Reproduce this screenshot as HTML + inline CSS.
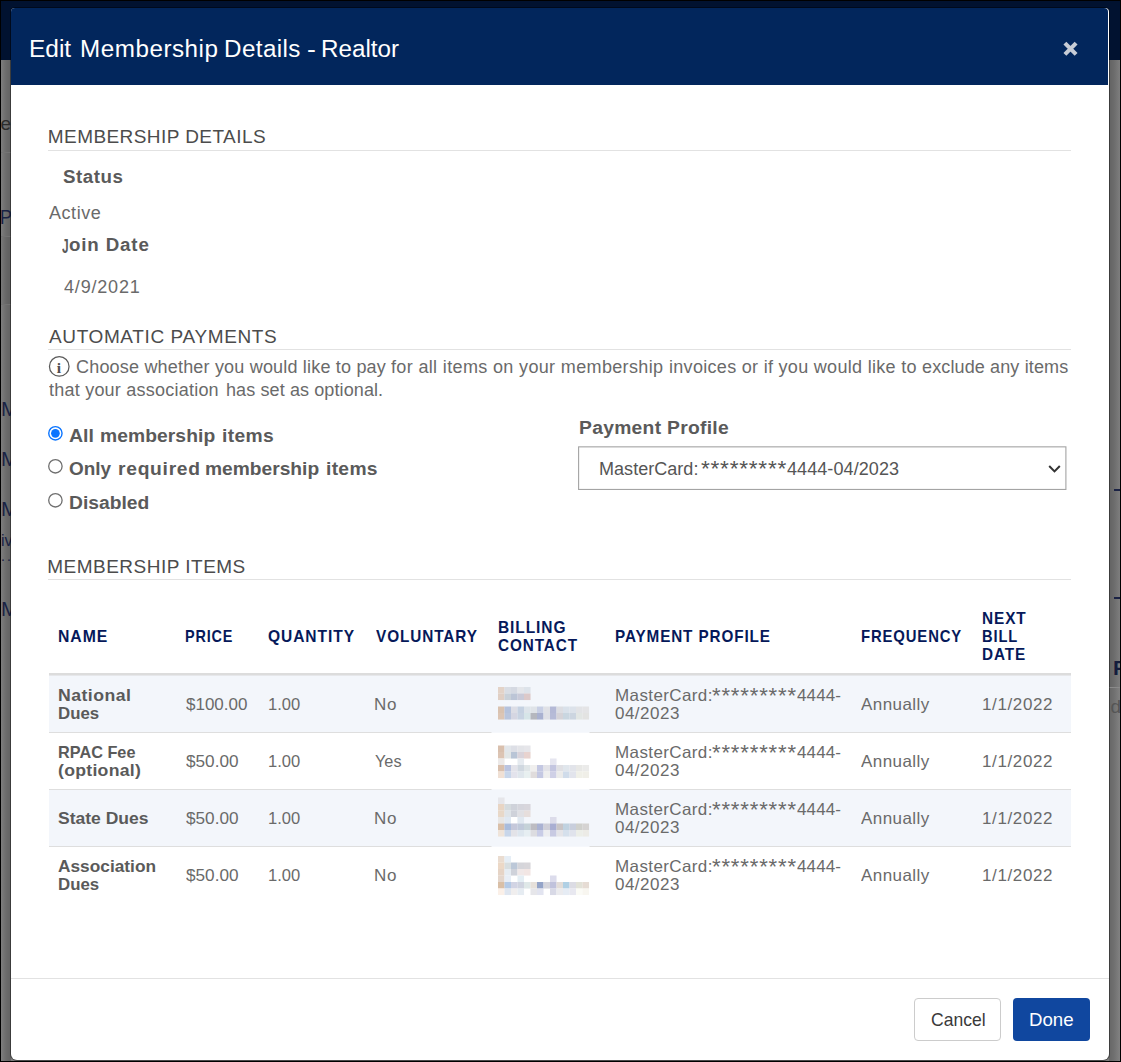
<!DOCTYPE html>
<html lang="en">
<head>
<meta charset="utf-8">
<title>Edit Membership Details - Realtor</title>
<style>
html,body{margin:0;padding:0}
body{width:1121px;height:1062px;overflow:hidden;position:relative;background:#7d7d7d;font-family:"Liberation Sans",sans-serif}
.abs{position:absolute}
.t{position:absolute;white-space:nowrap;transform-origin:0 50%;line-height:normal;font-family:"Liberation Sans",sans-serif}
#frame{position:absolute;left:0;top:0;width:1121px;height:1062px;box-sizing:border-box;border:1px solid #000;z-index:50;pointer-events:none}
#topband{position:absolute;left:0;top:0;width:1121px;height:60px;background:#011230}
#modal{position:absolute;left:11px;top:8px;width:1098px;height:1052px;background:#fff;border-radius:4px 4px 6px 6px;box-shadow:0 0 0 1px rgba(0,0,0,.4)}
#mhead{position:absolute;left:0;top:0;width:1097px;height:77px;background:#02265c;border-radius:4px 4px 0 0}
.hr{position:absolute;left:48px;width:1023px;height:1px;background:#e2e2e2}
.rowbg{position:absolute;left:49px;width:1022px;background:#f3f6fb}
.rowln{position:absolute;left:49px;width:1022px;height:1px;background:#dedede}
.btn{position:absolute;top:998px;height:43px;box-sizing:border-box;border-radius:4px}
</style>
</head>
<body>
<div id="topband"></div>
<div class="abs" style="left:1px;top:60px;width:10px;height:1001px;overflow:hidden;background:linear-gradient(90deg,#7e7e7e 0,#6c6c6c 5px,#646464 9px)">
<div class="abs" style="left:0;top:92px;width:10px;height:1px;background:#747474"></div>
<div class="abs" style="left:0;top:176px;width:10px;height:68px;background:rgba(0,0,0,.04)"></div>
<div class="abs" style="left:0;top:176px;width:10px;height:1px;background:#727272"></div>
<div class="abs" style="left:0;top:244px;width:10px;height:1px;background:#727272"></div>
<div class="t" style="left:-0.5px;top:53px;font-size:19px;color:#2c2c2c">e</div>
<div class="t" style="left:-1.5px;top:145px;font-size:21px;color:#1a2244;transform:scaleX(.85)">P</div>
<div class="t" style="left:0px;top:337px;font-size:20.5px;color:#1a2244">M</div>
<div class="t" style="left:0px;top:387px;font-size:20.5px;color:#1a2244">M</div>
<div class="t" style="left:0px;top:437px;font-size:20.5px;color:#1a2244">M</div>
<div class="t" style="left:0px;top:472px;font-size:16px;color:#1a2244">iv</div>
<div class="t" style="left:0px;top:488px;font-size:14px;color:#1a2244;letter-spacing:2px">..</div>
<div class="t" style="left:0px;top:536.5px;font-size:20.5px;color:#1a2244">M</div>
</div>
<div class="abs" style="left:1109px;top:60px;width:11px;height:1001px;overflow:hidden;background:linear-gradient(90deg,#646464 1px,#6c6c6c 5px,#7e7e7e 11px)">
<div class="abs" style="left:0;top:627px;width:11px;height:374px;background:rgba(255,255,255,.03)"></div>
<div class="abs" style="left:5px;top:429px;width:6px;height:1.5px;background:#1a2244"></div>
<div class="abs" style="left:5px;top:537px;width:6px;height:1.5px;background:#1a2244"></div>
<div class="abs" style="left:0;top:627px;width:11px;height:1px;background:#8a8a8a"></div>
<div class="t" style="left:4px;top:596px;font-size:21px;font-weight:700;color:#141c3c">P</div>
<div class="t" style="left:1.5px;top:636px;font-size:19px;color:#555">d</div>
</div>
<div id="modal"><div id="mhead"></div></div>
<div id="frame"></div>

<!-- close x -->
<svg class="abs" style="left:1058px;top:37px" width="24" height="24" viewBox="0 0 24 24"><path d="M6.9 6.1 L18.1 17.4 M18.1 6.1 L6.9 17.4" stroke="#c7ccd6" stroke-width="4.1" fill="none"/></svg>

<!-- rules -->
<div class="hr" style="top:150px"></div>
<div class="hr" style="top:349px"></div>
<div class="hr" style="top:579px"></div>
<div class="abs" style="left:11px;top:978px;width:1098px;height:1px;background:#e2e2e2"></div>

<!-- info icon -->
<svg class="abs" style="left:47px;top:355px" width="25" height="25" viewBox="0 0 25 25"><circle cx="12.25" cy="11.4" r="9.8" fill="none" stroke="#5a5a5a" stroke-width="1.25"/></svg>
<div class="t" style="left:56.7px;top:358.5px;font-family:'Liberation Serif',serif;font-weight:700;font-size:15.5px;color:#505050">i</div>

<!-- radios -->
<svg class="abs" style="left:46px;top:424px" width="20" height="86" viewBox="0 0 20 86">
<circle cx="9.4" cy="9.3" r="6.65" fill="#fff" stroke="#0a74ff" stroke-width="1.4"/><circle cx="9.4" cy="9.3" r="4.35" fill="#0a74ff"/>
<circle cx="9.4" cy="42.3" r="6.7" fill="#fff" stroke="#6f6f6f" stroke-width="1.3"/>
<circle cx="9.4" cy="76.3" r="6.7" fill="#fff" stroke="#6f6f6f" stroke-width="1.3"/>
</svg>

<!-- select -->
<svg class="abs" style="left:576px;top:444px" width="494" height="50" viewBox="0 0 494 50"><rect x="2.6" y="2.85" width="487.3" height="42.6" fill="#fff" stroke="#a4a4a4" stroke-width="1.1"/></svg>
<svg class="abs" style="left:1046px;top:462px" width="18" height="14" viewBox="0 0 18 14"><path d="M3.2 4 L8.5 9.4 L13.8 4" stroke="#333" stroke-width="2" fill="none"/></svg>

<!-- table -->
<div class="abs" style="left:49px;top:673px;width:1022px;height:2px;background:#dcdcdc"></div><div class="abs" style="left:49px;top:675px;width:1022px;height:1px;background:#e6e7ea;z-index:2"></div>
<div class="rowbg" style="top:675px;height:57px"></div>
<div class="rowln" style="top:732px"></div>
<div class="rowln" style="top:789px"></div>
<div class="rowbg" style="top:790px;height:56px"></div>
<div class="rowln" style="top:846px"></div>
<svg class="abs" style="left:491px;top:676px" width="100" height="228" viewBox="0 0 100 228">
<rect x="0.5" y="56" width="98" height="1" fill="#f6f8fc"/>
<rect x="0.5" y="113" width="98" height="1" fill="#f7f9fc"/>
<rect x="0.5" y="170" width="98" height="1" fill="#f6f8fc"/>
<rect x="7.0" y="11.0" width="6.55" height="6.55" fill="#e3d3c8"/>
<rect x="13.5" y="11.0" width="6.55" height="6.55" fill="#d9dde4"/>
<rect x="20.0" y="11.0" width="6.55" height="6.55" fill="#d5d9e2"/>
<rect x="26.5" y="11.0" width="6.55" height="6.55" fill="#e4e6ea"/>
<rect x="33.0" y="11.0" width="6.55" height="6.55" fill="#dde3ea"/>
<rect x="7.0" y="17.5" width="6.55" height="6.55" fill="#e0cfc4"/>
<rect x="13.5" y="17.5" width="6.55" height="6.55" fill="#c9d1d9"/>
<rect x="20.0" y="17.5" width="6.55" height="6.55" fill="#bcc5d6"/>
<rect x="26.5" y="17.5" width="6.55" height="6.55" fill="#c9cad8"/>
<rect x="33.0" y="17.5" width="6.55" height="6.55" fill="#dcc9c9"/>
<rect x="7.0" y="30.5" width="6.55" height="6.55" fill="#d9c2b0"/>
<rect x="13.5" y="30.5" width="6.55" height="6.55" fill="#b5c2dc"/>
<rect x="20.0" y="30.5" width="6.55" height="6.55" fill="#dcdde5"/>
<rect x="26.5" y="30.5" width="6.55" height="6.55" fill="#c5d1e1"/>
<rect x="33.0" y="30.5" width="6.55" height="6.55" fill="#dde4ea"/>
<rect x="39.5" y="30.5" width="6.55" height="6.55" fill="#dfe3e8"/>
<rect x="46.0" y="30.5" width="6.55" height="6.55" fill="#c8cfe4"/>
<rect x="52.5" y="30.5" width="6.55" height="6.55" fill="#e0e1e6"/>
<rect x="59.0" y="30.5" width="6.55" height="6.55" fill="#b4b9d6"/>
<rect x="65.5" y="30.5" width="6.55" height="6.55" fill="#dcdde2"/>
<rect x="72.0" y="30.5" width="6.55" height="6.55" fill="#d9e1ea"/>
<rect x="78.5" y="30.5" width="6.55" height="6.55" fill="#dce2ea"/>
<rect x="85.0" y="30.5" width="6.55" height="6.55" fill="#e2e3e6"/>
<rect x="91.5" y="30.5" width="6.55" height="6.55" fill="#e4e4e6"/>
<rect x="7.0" y="37.0" width="6.55" height="6.55" fill="#dcc5b4"/>
<rect x="13.5" y="37.0" width="6.55" height="6.55" fill="#b9c5dd"/>
<rect x="20.0" y="37.0" width="6.55" height="6.55" fill="#d5d6e2"/>
<rect x="26.5" y="37.0" width="6.55" height="6.55" fill="#c8d3e2"/>
<rect x="33.0" y="37.0" width="6.55" height="6.55" fill="#d6e5e8"/>
<rect x="39.5" y="37.0" width="6.55" height="6.55" fill="#b5b7be"/>
<rect x="46.0" y="37.0" width="6.55" height="6.55" fill="#a9b1d0"/>
<rect x="52.5" y="37.0" width="6.55" height="6.55" fill="#dfe0e6"/>
<rect x="59.0" y="37.0" width="6.55" height="6.55" fill="#b6bbd7"/>
<rect x="65.5" y="37.0" width="6.55" height="6.55" fill="#d5d3d8"/>
<rect x="72.0" y="37.0" width="6.55" height="6.55" fill="#c9d6e0"/>
<rect x="78.5" y="37.0" width="6.55" height="6.55" fill="#ccd5e0"/>
<rect x="85.0" y="37.0" width="6.55" height="6.55" fill="#e2e6e4"/>
<rect x="91.5" y="37.0" width="6.55" height="6.55" fill="#e3e3e2"/>
<rect x="7.0" y="69.5" width="6.55" height="6.55" fill="#d9c0ae"/>
<rect x="13.5" y="69.5" width="6.55" height="6.55" fill="#e2e6ea"/>
<rect x="20.0" y="69.5" width="6.55" height="6.55" fill="#dddfe6"/>
<rect x="26.5" y="69.5" width="6.55" height="6.55" fill="#e3e4e8"/>
<rect x="33.0" y="69.5" width="6.55" height="6.55" fill="#e6e6ea"/>
<rect x="7.0" y="76.0" width="6.55" height="6.55" fill="#dcc4b3"/>
<rect x="13.5" y="76.0" width="6.55" height="6.55" fill="#e2e6e6"/>
<rect x="20.0" y="76.0" width="6.55" height="6.55" fill="#b9c5d6"/>
<rect x="26.5" y="76.0" width="6.55" height="6.55" fill="#d9d3da"/>
<rect x="33.0" y="76.0" width="6.55" height="6.55" fill="#e8d3cf"/>
<rect x="7.0" y="82.5" width="6.55" height="6.55" fill="#ece9e8"/>
<rect x="26.5" y="82.5" width="6.55" height="6.55" fill="#e6ebf0"/>
<rect x="59.0" y="82.5" width="6.55" height="6.55" fill="#e6e6f0"/>
<rect x="7.0" y="89.0" width="6.55" height="6.55" fill="#d9c0ae"/>
<rect x="13.5" y="89.0" width="6.55" height="6.55" fill="#bac4e0"/>
<rect x="20.0" y="89.0" width="6.55" height="6.55" fill="#e3e3ea"/>
<rect x="26.5" y="89.0" width="6.55" height="6.55" fill="#d0d8e0"/>
<rect x="33.0" y="89.0" width="6.55" height="6.55" fill="#e0e6e8"/>
<rect x="39.5" y="89.0" width="6.55" height="6.55" fill="#f0efee"/>
<rect x="46.0" y="89.0" width="6.55" height="6.55" fill="#c4c8e2"/>
<rect x="52.5" y="89.0" width="6.55" height="6.55" fill="#e3e3e8"/>
<rect x="59.0" y="89.0" width="6.55" height="6.55" fill="#c4c6e0"/>
<rect x="65.5" y="89.0" width="6.55" height="6.55" fill="#e0e0e4"/>
<rect x="72.0" y="89.0" width="6.55" height="6.55" fill="#e0e6ec"/>
<rect x="78.5" y="89.0" width="6.55" height="6.55" fill="#e2e4ea"/>
<rect x="85.0" y="89.0" width="6.55" height="6.55" fill="#e8e8e6"/>
<rect x="91.5" y="89.0" width="6.55" height="6.55" fill="#ebebea"/>
<rect x="7.0" y="95.5" width="6.55" height="6.55" fill="#f0e0d4"/>
<rect x="13.5" y="95.5" width="6.55" height="6.55" fill="#c8d6ea"/>
<rect x="20.0" y="95.5" width="6.55" height="6.55" fill="#e3e3ec"/>
<rect x="26.5" y="95.5" width="6.55" height="6.55" fill="#dfe6ec"/>
<rect x="33.0" y="95.5" width="6.55" height="6.55" fill="#e8f0f0"/>
<rect x="39.5" y="95.5" width="6.55" height="6.55" fill="#e0dcdc"/>
<rect x="46.0" y="95.5" width="6.55" height="6.55" fill="#c4c8e2"/>
<rect x="52.5" y="95.5" width="6.55" height="6.55" fill="#eeeeee"/>
<rect x="59.0" y="95.5" width="6.55" height="6.55" fill="#cfd0e6"/>
<rect x="65.5" y="95.5" width="6.55" height="6.55" fill="#ebebea"/>
<rect x="72.0" y="95.5" width="6.55" height="6.55" fill="#d0dcea"/>
<rect x="78.5" y="95.5" width="6.55" height="6.55" fill="#e2e4ec"/>
<rect x="85.0" y="95.5" width="6.55" height="6.55" fill="#f0f0e8"/>
<rect x="91.5" y="95.5" width="6.55" height="6.55" fill="#f0efe8"/>
<rect x="7.0" y="121.5" width="6.55" height="6.55" fill="#e6e6ea"/>
<rect x="7.0" y="128.0" width="6.55" height="6.55" fill="#e8d5c4"/>
<rect x="13.5" y="128.0" width="6.55" height="6.55" fill="#d5dbde"/>
<rect x="20.0" y="128.0" width="6.55" height="6.55" fill="#cfd2da"/>
<rect x="26.5" y="128.0" width="6.55" height="6.55" fill="#d5d5dc"/>
<rect x="33.0" y="128.0" width="6.55" height="6.55" fill="#d8d6dc"/>
<rect x="7.0" y="134.5" width="6.55" height="6.55" fill="#e8d8c8"/>
<rect x="13.5" y="134.5" width="6.55" height="6.55" fill="#dfe4e8"/>
<rect x="20.0" y="134.5" width="6.55" height="6.55" fill="#cfd2da"/>
<rect x="26.5" y="134.5" width="6.55" height="6.55" fill="#e0e0e4"/>
<rect x="33.0" y="134.5" width="6.55" height="6.55" fill="#e6dedc"/>
<rect x="7.0" y="141.0" width="6.55" height="6.55" fill="#e8e6e4"/>
<rect x="13.5" y="141.0" width="6.55" height="6.55" fill="#dfe8f2"/>
<rect x="20.0" y="141.0" width="6.55" height="6.55" fill="#ffffff"/>
<rect x="26.5" y="141.0" width="6.55" height="6.55" fill="#e0e8f0"/>
<rect x="59.0" y="141.0" width="6.55" height="6.55" fill="#dcdcea"/>
<rect x="7.0" y="147.5" width="6.55" height="6.55" fill="#d9bfa8"/>
<rect x="13.5" y="147.5" width="6.55" height="6.55" fill="#a9bcdc"/>
<rect x="20.0" y="147.5" width="6.55" height="6.55" fill="#c5c8da"/>
<rect x="26.5" y="147.5" width="6.55" height="6.55" fill="#c0c9da"/>
<rect x="33.0" y="147.5" width="6.55" height="6.55" fill="#c5d2d8"/>
<rect x="39.5" y="147.5" width="6.55" height="6.55" fill="#bdbcc2"/>
<rect x="46.0" y="147.5" width="6.55" height="6.55" fill="#aab2d2"/>
<rect x="52.5" y="147.5" width="6.55" height="6.55" fill="#cfcfd8"/>
<rect x="59.0" y="147.5" width="6.55" height="6.55" fill="#a9aed2"/>
<rect x="65.5" y="147.5" width="6.55" height="6.55" fill="#c8c4c6"/>
<rect x="72.0" y="147.5" width="6.55" height="6.55" fill="#c0d2e0"/>
<rect x="78.5" y="147.5" width="6.55" height="6.55" fill="#c8cedc"/>
<rect x="85.0" y="147.5" width="6.55" height="6.55" fill="#cfd0cc"/>
<rect x="91.5" y="147.5" width="6.55" height="6.55" fill="#d5d3d2"/>
<rect x="7.0" y="154.0" width="6.55" height="6.55" fill="#efe4da"/>
<rect x="13.5" y="154.0" width="6.55" height="6.55" fill="#c8d6ea"/>
<rect x="20.0" y="154.0" width="6.55" height="6.55" fill="#e3e3e8"/>
<rect x="26.5" y="154.0" width="6.55" height="6.55" fill="#dde6ee"/>
<rect x="33.0" y="154.0" width="6.55" height="6.55" fill="#e6eef2"/>
<rect x="39.5" y="154.0" width="6.55" height="6.55" fill="#dcdce0"/>
<rect x="46.0" y="154.0" width="6.55" height="6.55" fill="#c8cce6"/>
<rect x="52.5" y="154.0" width="6.55" height="6.55" fill="#ecedf0"/>
<rect x="59.0" y="154.0" width="6.55" height="6.55" fill="#c8cae2"/>
<rect x="65.5" y="154.0" width="6.55" height="6.55" fill="#e4e4e8"/>
<rect x="72.0" y="154.0" width="6.55" height="6.55" fill="#d5e0ec"/>
<rect x="78.5" y="154.0" width="6.55" height="6.55" fill="#e0e3ec"/>
<rect x="85.0" y="154.0" width="6.55" height="6.55" fill="#eceee8"/>
<rect x="91.5" y="154.0" width="6.55" height="6.55" fill="#ecebe6"/>
<rect x="7.0" y="180.0" width="6.55" height="6.55" fill="#eadcd0"/>
<rect x="13.5" y="180.0" width="6.55" height="6.55" fill="#e6eef6"/>
<rect x="7.0" y="186.5" width="6.55" height="6.55" fill="#ecd8c6"/>
<rect x="13.5" y="186.5" width="6.55" height="6.55" fill="#d8dee0"/>
<rect x="20.0" y="186.5" width="6.55" height="6.55" fill="#bcc8d8"/>
<rect x="26.5" y="186.5" width="6.55" height="6.55" fill="#d5d5da"/>
<rect x="33.0" y="186.5" width="6.55" height="6.55" fill="#d8d6da"/>
<rect x="7.0" y="193.0" width="6.55" height="6.55" fill="#e6d4c6"/>
<rect x="13.5" y="193.0" width="6.55" height="6.55" fill="#e6ecf2"/>
<rect x="20.0" y="193.0" width="6.55" height="6.55" fill="#cfd2da"/>
<rect x="26.5" y="193.0" width="6.55" height="6.55" fill="#f0e8e8"/>
<rect x="33.0" y="193.0" width="6.55" height="6.55" fill="#f2e6e4"/>
<rect x="7.0" y="199.5" width="6.55" height="6.55" fill="#e4d6cc"/>
<rect x="13.5" y="199.5" width="6.55" height="6.55" fill="#e8eef6"/>
<rect x="26.5" y="199.5" width="6.55" height="6.55" fill="#e4eef4"/>
<rect x="59.0" y="199.5" width="6.55" height="6.55" fill="#dcdcec"/>
<rect x="7.0" y="206.0" width="6.55" height="6.55" fill="#d9bfa6"/>
<rect x="13.5" y="206.0" width="6.55" height="6.55" fill="#b4cae6"/>
<rect x="20.0" y="206.0" width="6.55" height="6.55" fill="#d2d4e4"/>
<rect x="26.5" y="206.0" width="6.55" height="6.55" fill="#d0d4e0"/>
<rect x="33.0" y="206.0" width="6.55" height="6.55" fill="#dfe8e8"/>
<rect x="39.5" y="206.0" width="6.55" height="6.55" fill="#e6e0da"/>
<rect x="46.0" y="206.0" width="6.55" height="6.55" fill="#94a4c8"/>
<rect x="52.5" y="206.0" width="6.55" height="6.55" fill="#d5d5dc"/>
<rect x="59.0" y="206.0" width="6.55" height="6.55" fill="#c0c2dc"/>
<rect x="65.5" y="206.0" width="6.55" height="6.55" fill="#e2dcd8"/>
<rect x="72.0" y="206.0" width="6.55" height="6.55" fill="#b0d0e4"/>
<rect x="78.5" y="206.0" width="6.55" height="6.55" fill="#dcdce4"/>
<rect x="85.0" y="206.0" width="6.55" height="6.55" fill="#e2e2d8"/>
<rect x="91.5" y="206.0" width="6.55" height="6.55" fill="#e6dcd4"/>
<rect x="7.0" y="212.5" width="6.55" height="6.55" fill="#fbf0e8"/>
<rect x="13.5" y="212.5" width="6.55" height="6.55" fill="#dfe6f0"/>
<rect x="20.0" y="212.5" width="6.55" height="6.55" fill="#f0eeee"/>
<rect x="26.5" y="212.5" width="6.55" height="6.55" fill="#e6ecf2"/>
<rect x="39.5" y="212.5" width="6.55" height="6.55" fill="#e6e6ea"/>
<rect x="46.0" y="212.5" width="6.55" height="6.55" fill="#e2e4f0"/>
<rect x="59.0" y="212.5" width="6.55" height="6.55" fill="#d8d9e6"/>
<rect x="65.5" y="212.5" width="6.55" height="6.55" fill="#ebebee"/>
<rect x="72.0" y="212.5" width="6.55" height="6.55" fill="#e6ecf4"/>
<rect x="78.5" y="212.5" width="6.55" height="6.55" fill="#e8e8f0"/>
<rect x="85.0" y="212.5" width="6.55" height="6.55" fill="#fbfbf6"/>
<rect x="91.5" y="212.5" width="6.55" height="6.55" fill="#f8f6f0"/>
</svg>

<!-- buttons -->
<div class="btn" style="left:914px;width:87px;border:1px solid #ccc;background:#fff"></div>
<div class="btn" style="left:1013px;width:77px;background:#10479f"></div>

<div class="t" style="left:29.19px;top:36.00px;font-size:23.5px;font-weight:400;color:#ffffff;letter-spacing:0.000px;transform:scaleX(1.0399)">Edit</div>
<div class="t" style="left:79.57px;top:36.00px;font-size:23.5px;font-weight:400;color:#ffffff;letter-spacing:0.519px;transform:scaleX(1.0300)">Membership</div>
<div class="t" style="left:224.42px;top:36.00px;font-size:23.5px;font-weight:400;color:#ffffff;letter-spacing:0.394px;transform:scaleX(1.0300)">Details</div>
<div class="t" style="left:306.57px;top:36.00px;font-size:23.5px;font-weight:400;color:#ffffff;letter-spacing:0.000px;transform:scaleX(1.1333)">-</div>
<div class="t" style="left:321.38px;top:36.00px;font-size:23.5px;font-weight:400;color:#ffffff;letter-spacing:0.000px;transform:scaleX(1.0300)">Realtor</div>
<div class="t" style="left:47.80px;top:126.00px;font-size:19px;font-weight:400;color:#4c4c4c;letter-spacing:0.430px">MEMBERSHIP DETAILS</div>
<div class="t" style="left:62.55px;top:167.00px;font-size:17.5px;font-weight:700;color:#5a5a5a;letter-spacing:0.491px;transform:scaleX(1.0700)">Status</div>
<div class="t" style="left:49.00px;top:203.00px;font-size:17.5px;font-weight:400;color:#6a6a6a;letter-spacing:0.518px;transform:scaleX(1.0300)">Active</div>
<div class="t" style="left:62.40px;top:234.00px;font-size:20.5px;font-weight:700;color:#5a5a5a;letter-spacing:0.000px;transform:scaleX(0.5800)">J</div>
<div class="t" style="left:68.55px;top:235.00px;font-size:17.5px;font-weight:700;color:#5a5a5a;letter-spacing:0.799px;transform:scaleX(1.0700)">oin Date</div>
<div class="t" style="left:63.80px;top:277.00px;font-size:17.5px;font-weight:400;color:#6a6a6a;letter-spacing:0.775px;transform:scaleX(1.0300)">4/9/2021</div>
<div class="t" style="left:49.00px;top:326.00px;font-size:19px;font-weight:400;color:#4c4c4c;letter-spacing:0.621px">AUTOMATIC PAYMENTS</div>
<div class="t" style="left:75.55px;top:357.00px;font-size:17.5px;font-weight:400;color:#6a6a6a;letter-spacing:0.172px;transform:scaleX(1.0300)">Choose whether you would like to pay</div>
<div class="t" style="left:391.45px;top:357.00px;font-size:17.5px;font-weight:400;color:#6a6a6a;letter-spacing:0.332px;transform:scaleX(1.0300)">for all items on your membership</div>
<div class="t" style="left:669.37px;top:357.00px;font-size:17.5px;font-weight:400;color:#6a6a6a;letter-spacing:0.283px;transform:scaleX(1.0300)">invoices or if you would like to</div>
<div class="t" style="left:921.55px;top:357.00px;font-size:17.5px;font-weight:400;color:#6a6a6a;letter-spacing:0.115px;transform:scaleX(1.0300)">exclude any items</div>
<div class="t" style="left:49.00px;top:380.00px;font-size:17.5px;font-weight:400;color:#6a6a6a;letter-spacing:0.210px;transform:scaleX(1.0300)">that your association</div>
<div class="t" style="left:225.87px;top:380.00px;font-size:17.5px;font-weight:400;color:#6a6a6a;letter-spacing:0.092px;transform:scaleX(1.0300)">has set as optional.</div>
<div class="t" style="left:68.60px;top:426.00px;font-size:18px;font-weight:700;color:#5a5a5a;letter-spacing:0.000px;transform:scaleX(1.0850)">All</div>
<div class="t" style="left:99.68px;top:426.00px;font-size:18px;font-weight:700;color:#5a5a5a;letter-spacing:0.066px;transform:scaleX(1.0700)">membership</div>
<div class="t" style="left:222.03px;top:426.00px;font-size:18px;font-weight:700;color:#5a5a5a;letter-spacing:0.320px;transform:scaleX(1.0700)">items</div>
<div class="t" style="left:69.10px;top:459.00px;font-size:18px;font-weight:700;color:#5a5a5a;letter-spacing:0.000px;transform:scaleX(1.0519)">Only</div>
<div class="t" style="left:117.93px;top:459.00px;font-size:18px;font-weight:700;color:#5a5a5a;letter-spacing:0.664px;transform:scaleX(1.0700)">required</div>
<div class="t" style="left:205.24px;top:459.00px;font-size:18px;font-weight:700;color:#5a5a5a;letter-spacing:0.000px;transform:scaleX(1.0664)">membership</div>
<div class="t" style="left:326.33px;top:459.00px;font-size:18px;font-weight:700;color:#5a5a5a;letter-spacing:0.282px;transform:scaleX(1.0700)">items</div>
<div class="t" style="left:69.48px;top:493.00px;font-size:18px;font-weight:700;color:#5a5a5a;letter-spacing:0.000px;transform:scaleX(1.0694)">Disabled</div>
<div class="t" style="left:578.63px;top:418.00px;font-size:18px;font-weight:700;color:#5a5a5a;letter-spacing:0.276px;transform:scaleX(1.0700)">Payment Profile</div>
<div class="t" style="left:598.97px;top:459.00px;font-size:17.5px;font-weight:400;color:#555555;letter-spacing:0.025px;transform:scaleX(1.0300)">MasterCard:</div>
<div class="t" style="left:700.75px;top:456.00px;font-size:22px;font-weight:400;color:#555555;letter-spacing:0.714px;transform:scaleX(1.0300)">*********</div>
<div class="t" style="left:787.38px;top:459.00px;font-size:17.5px;font-weight:400;color:#555555;letter-spacing:0.066px;transform:scaleX(1.0300)">4444-04/2023</div>
<div class="t" style="left:47.25px;top:556.00px;font-size:19px;font-weight:400;color:#4c4c4c;letter-spacing:0.486px">MEMBERSHIP ITEMS</div>
<div class="t" style="left:58.07px;top:627.00px;font-size:17px;font-weight:700;color:#06195a;letter-spacing:1.000px;transform:scaleX(0.9282)">NAME</div>
<div class="t" style="left:185.16px;top:627.00px;font-size:17px;font-weight:700;color:#06195a;letter-spacing:1.000px;transform:scaleX(0.8488)">PRICE</div>
<div class="t" style="left:267.50px;top:627.00px;font-size:17px;font-weight:700;color:#06195a;letter-spacing:1.000px;transform:scaleX(0.9164)">QUANTITY</div>
<div class="t" style="left:375.50px;top:627.00px;font-size:17px;font-weight:700;color:#06195a;letter-spacing:1.000px;transform:scaleX(0.9019)">VOLUNTARY</div>
<div class="t" style="left:498.10px;top:618.00px;font-size:17px;font-weight:700;color:#06195a;letter-spacing:1.000px;transform:scaleX(0.9119)">BILLING</div>
<div class="t" style="left:497.50px;top:636.00px;font-size:17px;font-weight:700;color:#06195a;letter-spacing:1.000px;transform:scaleX(0.9004)">CONTACT</div>
<div class="t" style="left:615.35px;top:627.00px;font-size:17px;font-weight:700;color:#06195a;letter-spacing:1.000px;transform:scaleX(0.8973)">PAYMENT PROFILE</div>
<div class="t" style="left:860.76px;top:627.00px;font-size:17px;font-weight:700;color:#06195a;letter-spacing:1.000px;transform:scaleX(0.8739)">FREQUENCY</div>
<div class="t" style="left:982.11px;top:609.00px;font-size:17px;font-weight:700;color:#06195a;letter-spacing:1.000px;transform:scaleX(0.9042)">NEXT</div>
<div class="t" style="left:981.89px;top:627.00px;font-size:17px;font-weight:700;color:#06195a;letter-spacing:1.000px;transform:scaleX(0.8633)">BILL</div>
<div class="t" style="left:981.85px;top:645.00px;font-size:17px;font-weight:700;color:#06195a;letter-spacing:1.000px;transform:scaleX(0.8998)">DATE</div>
<div class="t" style="left:930.60px;top:1009.00px;font-size:18.5px;font-weight:400;color:#3a3a3a;letter-spacing:0.000px;transform:scaleX(0.9486)">Cancel</div>
<div class="t" style="left:1028.99px;top:1009.00px;font-size:18.5px;font-weight:400;color:#ffffff;letter-spacing:0.000px;transform:scaleX(1.0084)">Done</div>
<div class="t" style="left:58.43px;top:686.00px;font-size:16.5px;font-weight:700;color:#5a5a5a;letter-spacing:0.434px;transform:scaleX(1.0700)">National</div>
<div class="t" style="left:58.28px;top:704.00px;font-size:16.5px;font-weight:700;color:#5a5a5a;letter-spacing:0.000px;transform:scaleX(1.0199)">Dues</div>
<div class="t" style="left:185.75px;top:695.00px;font-size:16.5px;font-weight:400;color:#6a6a6a;letter-spacing:0.000px;transform:scaleX(1.0300)">$100.00</div>
<div class="t" style="left:268.00px;top:695.00px;font-size:16.5px;font-weight:400;color:#6a6a6a;letter-spacing:0.000px;transform:scaleX(1.0020)">1.00</div>
<div class="t" style="left:374.10px;top:695.00px;font-size:16.5px;font-weight:400;color:#6a6a6a;letter-spacing:0.812px;transform:scaleX(1.0300)">No</div>
<div class="t" style="left:615.22px;top:686.00px;font-size:16.5px;font-weight:400;color:#6a6a6a;letter-spacing:0.382px;transform:scaleX(1.0300)">MasterCard:</div>
<div class="t" style="left:712.38px;top:684.00px;font-size:21.5px;font-weight:400;color:#6a6a6a;letter-spacing:0.793px;transform:scaleX(1.0300)">*********</div>
<div class="t" style="left:797.00px;top:686.00px;font-size:16.5px;font-weight:400;color:#6a6a6a;letter-spacing:0.132px;transform:scaleX(1.0300)">4444-</div>
<div class="t" style="left:614.88px;top:704.00px;font-size:16.5px;font-weight:400;color:#6a6a6a;letter-spacing:0.469px;transform:scaleX(1.0300)">04/2023</div>
<div class="t" style="left:860.88px;top:695.00px;font-size:16.5px;font-weight:400;color:#6a6a6a;letter-spacing:0.414px;transform:scaleX(1.0300)">Annually</div>
<div class="t" style="left:981.97px;top:695.00px;font-size:16.5px;font-weight:400;color:#6a6a6a;letter-spacing:0.611px;transform:scaleX(1.0300)">1/1/2022</div>
<div class="t" style="left:58.12px;top:743.00px;font-size:16.5px;font-weight:700;color:#5a5a5a;letter-spacing:0.000px;transform:scaleX(0.9858)">RPAC Fee</div>
<div class="t" style="left:58.05px;top:761.00px;font-size:16.5px;font-weight:700;color:#5a5a5a;letter-spacing:0.256px;transform:scaleX(1.0700)">(optional)</div>
<div class="t" style="left:186.00px;top:752.00px;font-size:16.5px;font-weight:400;color:#6a6a6a;letter-spacing:0.000px;transform:scaleX(1.0411)">$50.00</div>
<div class="t" style="left:268.00px;top:752.00px;font-size:16.5px;font-weight:400;color:#6a6a6a;letter-spacing:0.000px;transform:scaleX(1.0020)">1.00</div>
<div class="t" style="left:374.88px;top:752.00px;font-size:16.5px;font-weight:400;color:#6a6a6a;letter-spacing:0.000px;transform:scaleX(0.9863)">Yes</div>
<div class="t" style="left:615.22px;top:743.00px;font-size:16.5px;font-weight:400;color:#6a6a6a;letter-spacing:0.382px;transform:scaleX(1.0300)">MasterCard:</div>
<div class="t" style="left:712.38px;top:741.00px;font-size:21.5px;font-weight:400;color:#6a6a6a;letter-spacing:0.793px;transform:scaleX(1.0300)">*********</div>
<div class="t" style="left:797.00px;top:743.00px;font-size:16.5px;font-weight:400;color:#6a6a6a;letter-spacing:0.132px;transform:scaleX(1.0300)">4444-</div>
<div class="t" style="left:614.88px;top:761.00px;font-size:16.5px;font-weight:400;color:#6a6a6a;letter-spacing:0.469px;transform:scaleX(1.0300)">04/2023</div>
<div class="t" style="left:860.88px;top:752.00px;font-size:16.5px;font-weight:400;color:#6a6a6a;letter-spacing:0.414px;transform:scaleX(1.0300)">Annually</div>
<div class="t" style="left:981.97px;top:752.00px;font-size:16.5px;font-weight:400;color:#6a6a6a;letter-spacing:0.611px;transform:scaleX(1.0300)">1/1/2022</div>
<div class="t" style="left:58.05px;top:809.00px;font-size:16.5px;font-weight:700;color:#5a5a5a;letter-spacing:0.000px;transform:scaleX(1.0617)">State Dues</div>
<div class="t" style="left:186.00px;top:809.00px;font-size:16.5px;font-weight:400;color:#6a6a6a;letter-spacing:0.000px;transform:scaleX(1.0411)">$50.00</div>
<div class="t" style="left:268.00px;top:809.00px;font-size:16.5px;font-weight:400;color:#6a6a6a;letter-spacing:0.000px;transform:scaleX(1.0020)">1.00</div>
<div class="t" style="left:374.10px;top:809.00px;font-size:16.5px;font-weight:400;color:#6a6a6a;letter-spacing:0.812px;transform:scaleX(1.0300)">No</div>
<div class="t" style="left:615.22px;top:800.00px;font-size:16.5px;font-weight:400;color:#6a6a6a;letter-spacing:0.382px;transform:scaleX(1.0300)">MasterCard:</div>
<div class="t" style="left:712.38px;top:798.00px;font-size:21.5px;font-weight:400;color:#6a6a6a;letter-spacing:0.793px;transform:scaleX(1.0300)">*********</div>
<div class="t" style="left:797.00px;top:800.00px;font-size:16.5px;font-weight:400;color:#6a6a6a;letter-spacing:0.132px;transform:scaleX(1.0300)">4444-</div>
<div class="t" style="left:614.88px;top:818.00px;font-size:16.5px;font-weight:400;color:#6a6a6a;letter-spacing:0.469px;transform:scaleX(1.0300)">04/2023</div>
<div class="t" style="left:860.88px;top:809.00px;font-size:16.5px;font-weight:400;color:#6a6a6a;letter-spacing:0.414px;transform:scaleX(1.0300)">Annually</div>
<div class="t" style="left:981.97px;top:809.00px;font-size:16.5px;font-weight:400;color:#6a6a6a;letter-spacing:0.611px;transform:scaleX(1.0300)">1/1/2022</div>
<div class="t" style="left:57.90px;top:857.00px;font-size:16.5px;font-weight:700;color:#5a5a5a;letter-spacing:0.000px;transform:scaleX(1.0479)">Association</div>
<div class="t" style="left:58.28px;top:875.00px;font-size:16.5px;font-weight:700;color:#5a5a5a;letter-spacing:0.000px;transform:scaleX(1.0199)">Dues</div>
<div class="t" style="left:186.00px;top:866.00px;font-size:16.5px;font-weight:400;color:#6a6a6a;letter-spacing:0.000px;transform:scaleX(1.0411)">$50.00</div>
<div class="t" style="left:268.00px;top:866.00px;font-size:16.5px;font-weight:400;color:#6a6a6a;letter-spacing:0.000px;transform:scaleX(1.0020)">1.00</div>
<div class="t" style="left:374.10px;top:866.00px;font-size:16.5px;font-weight:400;color:#6a6a6a;letter-spacing:0.812px;transform:scaleX(1.0300)">No</div>
<div class="t" style="left:615.22px;top:857.00px;font-size:16.5px;font-weight:400;color:#6a6a6a;letter-spacing:0.382px;transform:scaleX(1.0300)">MasterCard:</div>
<div class="t" style="left:712.38px;top:855.00px;font-size:21.5px;font-weight:400;color:#6a6a6a;letter-spacing:0.793px;transform:scaleX(1.0300)">*********</div>
<div class="t" style="left:797.00px;top:857.00px;font-size:16.5px;font-weight:400;color:#6a6a6a;letter-spacing:0.132px;transform:scaleX(1.0300)">4444-</div>
<div class="t" style="left:614.88px;top:875.00px;font-size:16.5px;font-weight:400;color:#6a6a6a;letter-spacing:0.469px;transform:scaleX(1.0300)">04/2023</div>
<div class="t" style="left:860.88px;top:866.00px;font-size:16.5px;font-weight:400;color:#6a6a6a;letter-spacing:0.414px;transform:scaleX(1.0300)">Annually</div>
<div class="t" style="left:981.97px;top:866.00px;font-size:16.5px;font-weight:400;color:#6a6a6a;letter-spacing:0.611px;transform:scaleX(1.0300)">1/1/2022</div>
</body>
</html>
